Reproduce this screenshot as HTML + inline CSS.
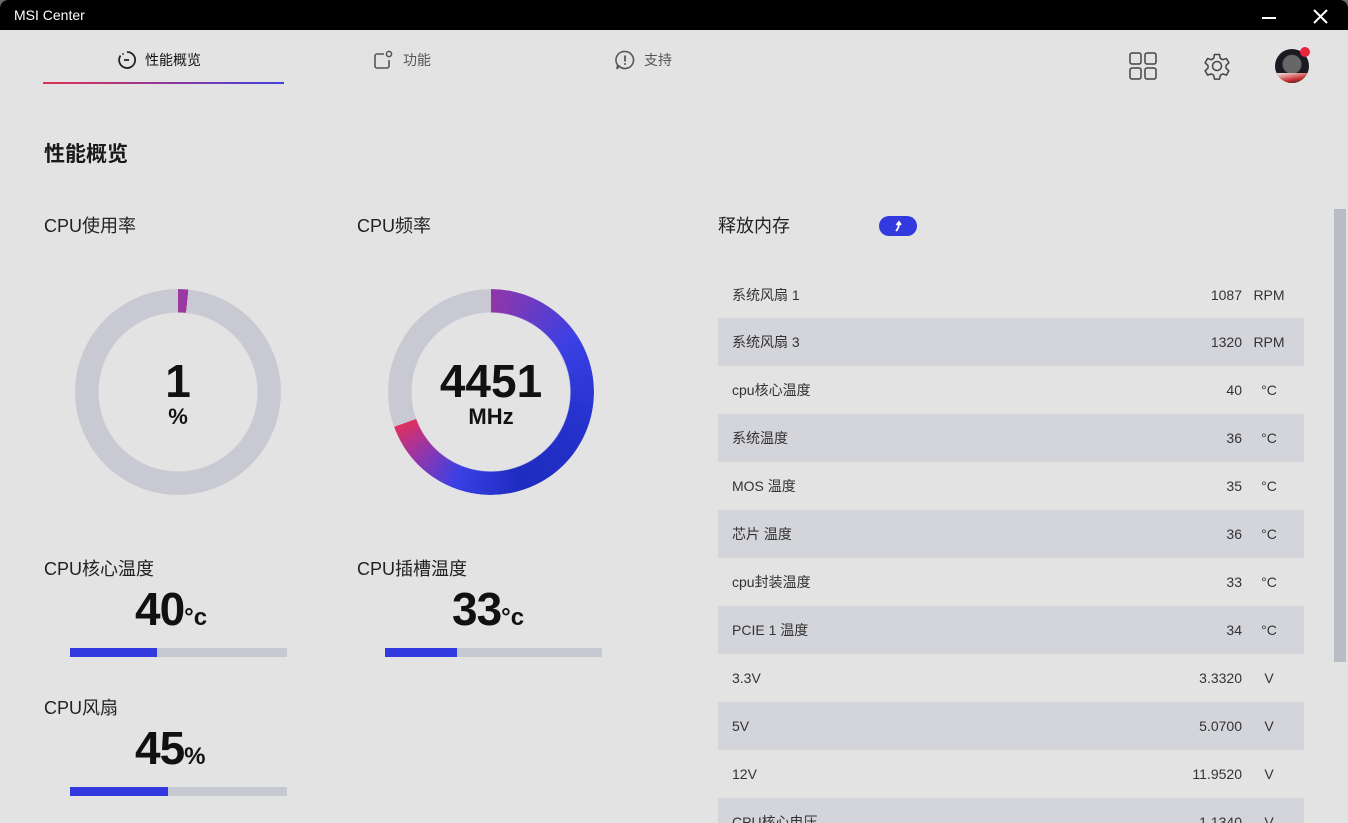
<!DOCTYPE html>
<html><head><meta charset="utf-8"><style>
*{margin:0;padding:0;box-sizing:border-box}
body{width:1348px;height:823px;overflow:hidden;background:#6a6a6a;font-family:"Liberation Sans","Noto Sans CJK SC",sans-serif;color:#1a1a1a;position:relative}
.win{position:absolute;left:0;top:0;width:1348px;height:823px;background:#e3e3e3;border-radius:8px 8px 0 0;overflow:hidden}
.tb{position:absolute;left:0;top:0;width:1348px;height:30px;background:#000;color:#fff;font-size:14px}
.abs{position:absolute}
.tab{position:absolute;top:50px;font-size:14px;color:#555;display:flex;align-items:center;gap:8px}
.lbl{position:absolute;font-size:18px;color:#222}
.gauge{position:absolute;width:206px;height:206px;border-radius:50%;-webkit-mask:radial-gradient(circle,transparent 79px,#000 80px);mask:radial-gradient(circle,transparent 79px,#000 80px)}
.gtxt{position:absolute;width:206px;text-align:center;font-weight:bold;color:#111}
.big{position:absolute;font-size:46px;font-weight:bold;color:#111;letter-spacing:-1px}
.big span{font-size:24px;letter-spacing:0}
.bar{position:absolute;width:217px;height:9px;background:#c6c8d2}
.bar div{height:9px;background:#3139df}
.row{position:absolute;left:718px;width:586px;height:48px;font-size:14px;color:#333;line-height:48px}
.row.s{background:#d4d5da}
.row span{position:absolute;top:0;line-height:48px;height:48px}
.row .n{left:14px}
.row .v{right:62px}
.row .u{left:524px;width:54px;text-align:center}
</style></head><body><div class="win">
<div class="tb"><div class="abs" style="left:14px;top:7px">MSI Center</div>
<div class="abs" style="left:1262px;top:17px;width:14px;height:2px;background:#fff"></div>
<svg class="abs" style="left:1313px;top:9px" width="15" height="15"><path d="M1 1L14 14M14 1L1 14" stroke="#fff" stroke-width="2"/></svg></div>

<div class="tab" style="left:117px;color:#111"><svg width="20" height="20" viewBox="0 0 20 20"><path d="M10 2A8 8 0 1 1 3.5 5.5" fill="none" stroke="#222" stroke-width="1.8"/><path d="M7 10h5" stroke="#222" stroke-width="1.8"/><circle cx="6" cy="4" r="0.9" fill="#222"/></svg>性能概览</div>
<div class="abs" style="left:43px;top:82px;width:241px;height:2px;background:linear-gradient(90deg,#e03050,#4040e0)"></div>
<div class="tab" style="left:373px"><svg width="22" height="20" viewBox="0 0 22 20"><path d="M11 4H4a2 2 0 0 0-2 2v10a2 2 0 0 0 2 2h10a2 2 0 0 0 2-2V10" fill="none" stroke="#555" stroke-width="1.6"/><circle cx="16" cy="4" r="2.6" fill="none" stroke="#555" stroke-width="1.5"/></svg>功能</div>
<div class="tab" style="left:614px"><svg width="22" height="20" viewBox="0 0 22 20"><path d="M11 1.5a8.5 8.5 0 1 1-6 14.5L3 19l.6-4A8.5 8.5 0 0 1 11 1.5z" fill="none" stroke="#555" stroke-width="1.6"/><path d="M11 5.5v6" stroke="#555" stroke-width="1.8"/><circle cx="11" cy="14" r="1" fill="#555"/></svg>支持</div>

<svg class="abs" style="left:1129px;top:52px" width="28" height="28"><g fill="none" stroke="#444" stroke-width="1.5"><rect x="1" y="1" width="11" height="11" rx="2"/><rect x="16" y="1" width="11" height="11" rx="2"/><rect x="1" y="16" width="11" height="11" rx="2"/><rect x="16" y="16" width="11" height="11" rx="2"/></g></svg>
<svg class="abs" style="left:1201px;top:50px" width="32" height="32" viewBox="0 0 32 32"><path d="M13.5 2h5l.8 3.8 2.4 1.4 3.7-1.2 2.5 4.3-2.9 2.6v2.8l2.9 2.6-2.5 4.3-3.7-1.2-2.4 1.4-.8 3.8h-5l-.8-3.8-2.4-1.4-3.700 1.2-2.5-4.3 2.9-2.6v-2.8L4.1 10.3l2.5-4.3 3.7 1.2 2.4-1.4z" transform="translate(0 2.5)" fill="none" stroke="#444" stroke-width="1.5" stroke-linejoin="round"/><circle cx="16" cy="16" r="4.5" fill="none" stroke="#444" stroke-width="1.5"/></svg>
<div class="abs" style="left:1275px;top:49px;width:34px;height:34px;border-radius:50%;background:radial-gradient(circle at 50% 45%,#666 0 9px,#1a1a22 10px);overflow:hidden"><div class="abs" style="left:0;top:24px;width:34px;height:10px;background:linear-gradient(170deg,#eee,#c33 60%,#222)"></div></div>
<div class="abs" style="left:1300px;top:47px;width:10px;height:10px;border-radius:50%;background:#e8253a"></div>

<div class="abs" style="left:44px;top:138px;font-size:21px;font-weight:bold">性能概览</div>

<div class="lbl" style="left:44px;top:212px">CPU使用率</div>
<div class="lbl" style="left:357px;top:212px">CPU频率</div>
<div class="gauge" style="left:75px;top:289px;background:conic-gradient(#9a3aa0 0 1.6%,#c8c9d3 1.6% 100%)"></div>
<div class="gtxt" style="left:75px;top:354px;font-size:46px">1</div>
<div class="gtxt" style="left:75px;top:404px;font-size:22px">%</div>
<div class="gauge" style="left:388px;top:289px;background:conic-gradient(#9236a8 0%,#3a40e4 16%,#2532cc 30%,#1e2cc0 45%,#3a40e4 56%,#9a35a6 64%,#e03060 69.5%,#c8c9d3 69.5% 100%)"></div>
<div class="gtxt" style="left:388px;top:354px;font-size:46px">4451</div>
<div class="gtxt" style="left:388px;top:404px;font-size:22px">MHz</div>

<div class="lbl" style="left:44px;top:555px">CPU核心温度</div>
<div class="big" style="left:135px;top:582px">40<span>°c</span></div>
<div class="bar" style="left:70px;top:648px"><div style="width:87px"></div></div>
<div class="lbl" style="left:357px;top:555px">CPU插槽温度</div>
<div class="big" style="left:452px;top:582px">33<span>°c</span></div>
<div class="bar" style="left:385px;top:648px"><div style="width:72px"></div></div>
<div class="lbl" style="left:44px;top:694px">CPU风扇</div>
<div class="big" style="left:135px;top:721px">45<span>%</span></div>
<div class="bar" style="left:70px;top:787px"><div style="width:98px"></div></div>

<div class="lbl" style="left:718px;top:212px">释放内存</div>
<div class="abs" style="left:879px;top:216px;width:38px;height:20px;border-radius:10px;background:#3139df"><svg class="abs" style="left:13px;top:4px" width="12" height="12"><path d="M4 11c2-2 3-4 3-8M4.5 5L7 2l2 3" fill="none" stroke="#fff" stroke-width="1.8"/></svg></div>

<div class="row" style="top:271px"><span class="n">系统风扇 1</span><span class="v">1087</span><span class="u">RPM</span></div>
<div class="row s" style="top:318px"><span class="n">系统风扇 3</span><span class="v">1320</span><span class="u">RPM</span></div>
<div class="row" style="top:366px"><span class="n">cpu核心温度</span><span class="v">40</span><span class="u">°C</span></div>
<div class="row s" style="top:414px"><span class="n">系统温度</span><span class="v">36</span><span class="u">°C</span></div>
<div class="row" style="top:462px"><span class="n">MOS 温度</span><span class="v">35</span><span class="u">°C</span></div>
<div class="row s" style="top:510px"><span class="n">芯片 温度</span><span class="v">36</span><span class="u">°C</span></div>
<div class="row" style="top:558px"><span class="n">cpu封装温度</span><span class="v">33</span><span class="u">°C</span></div>
<div class="row s" style="top:606px"><span class="n">PCIE 1 温度</span><span class="v">34</span><span class="u">°C</span></div>
<div class="row" style="top:654px"><span class="n">3.3V</span><span class="v">3.3320</span><span class="u">V</span></div>
<div class="row s" style="top:702px"><span class="n">5V</span><span class="v">5.0700</span><span class="u">V</span></div>
<div class="row" style="top:750px"><span class="n">12V</span><span class="v">11.9520</span><span class="u">V</span></div>
<div class="row s" style="top:798px"><span class="n">CPU核心电压</span><span class="v">1.1340</span><span class="u">V</span></div>

<div class="abs" style="left:1334px;top:209px;width:12px;height:453px;background:#b9bbc5"></div>
</div></body></html>
